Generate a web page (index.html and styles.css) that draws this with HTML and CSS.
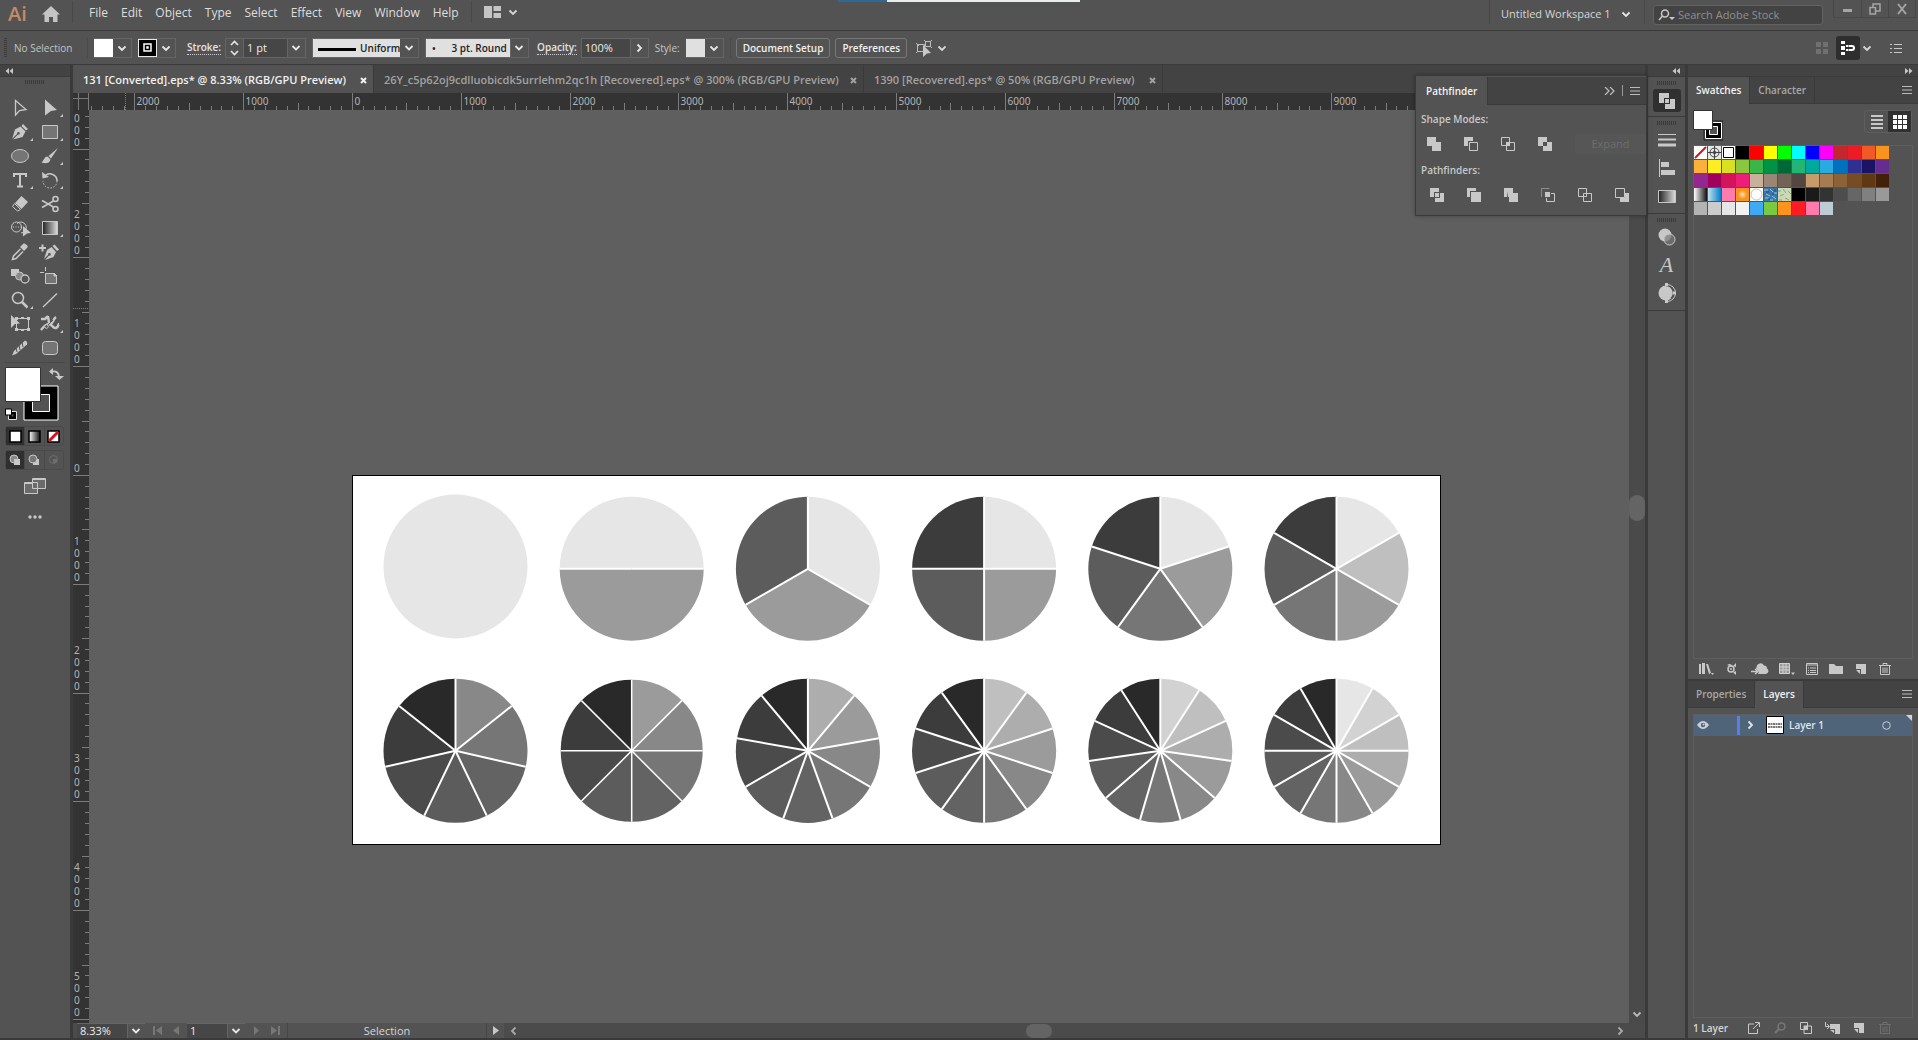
FILE: index.html
```
<!DOCTYPE html>
<html lang="en">
<head>
  <meta charset="UTF-8" />
  <meta name="viewport" content="width=device-width, initial-scale=1.0"/>
  <title>131 [Converted].eps</title>
  <link rel="stylesheet" href="styles.css">
</head>
<body>
  <!-- shared glyphs -->
  <svg class="defs" aria-hidden="true">
    <defs>
      <linearGradient id="fade"><stop offset="0" stop-color="#222"/><stop offset="1" stop-color="#ddd"/></linearGradient>
      <linearGradient id="fadeRev"><stop offset="0" stop-color="#fff"/><stop offset="1" stop-color="#111"/></linearGradient>
    </defs>
    <symbol id="chev" viewBox="0 0 10 10"><path d="M1.5 3.5 5 7l3.500-3.500" fill="none" stroke="currentColor" stroke-width="1.8"/></symbol>
    <symbol id="menu" viewBox="0 0 10 10"><path d="M0 1.500h10M0 5h10M0 8.500h10" stroke="currentColor"/></symbol>
    <symbol id="left2" viewBox="0 0 8 6"><path d="M4 0v6L.5 3zM8 0v6L4.500 3z" fill="currentColor"/></symbol>
    <symbol id="right2" viewBox="0 0 8 6"><path d="M0 0v6l3.500-3zM4 0v6l3.500-3z" fill="currentColor"/></symbol>
    <symbol id="new" viewBox="0 0 12 12"><path d="M1 1h10v10H6V6H1z" fill="currentColor"/><path d="M1 7h4v4z" fill="currentColor"/></symbol>
    <symbol id="trash" viewBox="0 0 12 12"><path d="M0 2.500h12M4 2V.500h4V2M1.500 3v8.500h9V3M4 4.500v5.500M6 4.500v5.500M8 4.500v5.500" fill="none" stroke="currentColor"/></symbol>
  </svg>

  <header class="menubar">
    <span class="logo">Ai</span>
    <button class="plain home" aria-label="Home"><svg width="18" height="16" viewBox="0 0 18 16"><path d="M9 0 0 8.500h2.500V16H7v-5h4v5h4.500V8.500H18z" fill="#c4c4c4"/></svg></button>
    <nav class="menus">
      <a href="#">File</a><a href="#">Edit</a><a href="#">Object</a><a href="#">Type</a><a href="#">Select</a><a href="#">Effect</a><a href="#">View</a><a href="#">Window</a><a href="#">Help</a>
    </nav>
    <button class="plain arrange" aria-label="Arrange documents">
      <svg width="17" height="12" viewBox="0 0 17 12"><path d="M0 0h8v12H0zM9.500 0H17v5H9.500zM9.500 7H17v5H9.500z" fill="#c4c4c4"/></svg>
      <svg width="10" height="10"><use href="#chev"/></svg>
    </button>
    <div class="progress"></div>
    <div class="workspace"><select class="ws" aria-label="Workspace"><option>Untitled Workspace 1</option></select></div>
    <label class="search">
      <svg width="18" height="12" viewBox="0 0 18 12"><g fill="none" stroke="#c8c8c8" stroke-width="1.500"><circle cx="7" cy="4.500" r="3.500"/><path d="M4.500 7 1 11"/></g><path d="M11 8h6l-3 3z" fill="#c8c8c8"/></svg>
      <input type="text" placeholder="Search Adobe Stock" aria-label="Search Adobe Stock">
    </label>
    <div class="winbtns">
      <button aria-label="Minimize"><svg width="12" height="12"><path d="M1 7.500h9" stroke="#a5a5a5" stroke-width="3"/></svg></button>
      <button aria-label="Restore"><svg width="12" height="12" fill="none" stroke="#a5a5a5" stroke-width="1.500"><path d="M1 4.500h5.500V11H1zM4 4.500V1h7v7H6.500"/></svg></button>
      <button aria-label="Close"><svg width="12" height="12"><path d="m2 1 8 10M10 1 2 11" stroke="#a5a5a5" stroke-width="2"/></svg></button>
    </div>
  </header>

  <section class="control">
    <i class="vgrip"></i>
    <span class="nosel">No Selection</span>
    <div class="combo fillpick"><button class="sw white" aria-label="Fill"></button><button class="drop" aria-label="Fill menu"><svg width="10" height="10"><use href="#chev"/></svg></button></div>
    <div class="combo strokepick"><button class="sw black" aria-label="Stroke colour"><svg width="9" height="9"><path d="M1 1h7v7H1zM4 4h1v1H4z" fill="none" stroke="#fff" stroke-width="1.500"/></svg></button><button class="drop" aria-label="Stroke menu"><svg width="10" height="10"><use href="#chev"/></svg></button></div>
    <label class="lbl" for="weight">Stroke:</label>
    <div class="combo weight">
      <button class="spin" aria-label="Step stroke"><svg width="9" height="16" viewBox="0 0 9 16"><path d="m1 5 3.500-3.500L8 5M1 11l3.500 3.500L8 11" fill="none" stroke="#e6e6e6" stroke-width="1.600"/></svg></button>
      <select id="weight" class="dd dark"><option>1 pt</option></select>
    </div>
    <select class="dd light uniform" aria-label="Width profile"><option>Uniform</option></select>
    <select class="dd light round" aria-label="Brush"><option>•&nbsp; &nbsp; &nbsp;&nbsp;3 pt. Round</option></select>
    <label class="lbl" for="opacity">Opacity:</label>
    <div class="combo opacity"><input id="opacity" type="text" value="100%"><button class="drop" aria-label="Opacity slider"><svg class="turn" width="10" height="10"><use href="#chev"/></svg></button></div>
    <span class="style-lbl">Style:</span>
    <div class="combo"><button class="sw grey" aria-label="Style"></button><button class="drop" aria-label="Style menu"><svg width="10" height="10"><use href="#chev"/></svg></button></div>
    <div class="docbtns"><button class="btn">Document Setup</button><button class="btn">Preferences</button></div>
    <button class="plain similar" aria-label="Select similar">
      <svg width="18" height="18" viewBox="0 0 18 18"><g fill="none" stroke="#bdbdbd"><path d="M2.500 5.500h7v7h-7zM10.500 2.500h5v5h-5zM1 4l3 3M1 14l2-2M9 1l2 2M17 1l-2 2M17 9l-2-2"/></g><path d="m8 6 8 8-4 .5L8 18z" fill="#c8c8c8"/></svg>
      <svg width="10" height="10"><use href="#chev"/></svg>
    </button>
    <div class="ctl-right">
      <svg width="12" height="12" fill="#707070"><path d="M0 0h5v5H0zM7 0h5v5H7zM0 7h5v5H0zM7 7h5v5H7z"/></svg>
      <button class="snap" aria-label="Snap"><svg width="14" height="14" viewBox="0 0 14 14"><path d="M0 0h4v3H0zM0 5h4v4H0zM0 11h4v3H0zM5 4h2v2H5zM5 8h2v2H5z" fill="#fff"/><path d="M7.500 5H11a2 2 0 0 1 0 4H7.500" fill="none" stroke="#fff" stroke-width="2"/></svg></button>
      <svg class="snapchev" width="10" height="10"><use href="#chev"/></svg>
      <button class="plain" aria-label="Options"><svg width="12" height="10" fill="none" stroke="#c8c8c8"><path d="M0 1.500h2M4 1.500h8M0 5.500h2M4 5.500h8M0 9.500h2M4 9.500h8"/></svg></button>
    </div>
  </section>

  <main class="workarea">
    <aside class="tools">
      <div class="strip"><svg width="8" height="6"><use href="#left2"/></svg></div>
      <i class="grip"></i>
      <div class="toolgrid">
        <button aria-label="Selection"><svg viewBox="0 0 20 20"><path d="M5.500 2.500 16 11.500 9.500 12.500 5.500 17z" fill="none" stroke="#c8c8c8" stroke-width="1.300"/></svg></button>
        <button class="more" aria-label="Direct selection"><svg viewBox="0 0 20 20"><path d="M5 1.500 17 12l-6 1-6 4.500z" fill="#c8c8c8"/></svg></button>
        <button class="more" aria-label="Pen"><svg viewBox="0 0 20 20"><path d="m13 2 5 5-2 1.500L11.500 4zM10.500 4.500l5 5-3 5.500L3 17.500l5-5a1.300 1.300 0 1 0-.8-.8l-5 5L5 7.500z" fill="#c8c8c8"/></svg></button>
        <button class="more" aria-label="Rectangle"><svg viewBox="0 0 20 20"><path d="M2.500 3.500h15v13h-15z" fill="#757575" stroke="#c8c8c8"/></svg></button>
        <button aria-label="Ellipse"><svg viewBox="0 0 20 20"><ellipse cx="10" cy="10" rx="8.500" ry="6.500" fill="#757575" stroke="#c8c8c8"/></svg></button>
        <button class="more" aria-label="Paintbrush"><svg viewBox="0 0 20 20"><path d="M18 2 8.500 10l2.500 2.500zM7.500 10.500c-3 0-3 3-6 6 4 1.500 8 1 9-3z" fill="#c8c8c8"/></svg></button>
        <button class="more" aria-label="Type"><svg viewBox="0 0 20 20"><path d="M4 7V4h12v3M10 4v12.500M7 16.500h6" fill="none" stroke="#c8c8c8" stroke-width="2"/></svg></button>
        <button class="more" aria-label="Rotate"><svg viewBox="0 0 20 20"><path d="M5 6a7 7 0 0 1 12 5" fill="none" stroke="#c8c8c8" stroke-width="1.500"/><path d="M17 11A7 7 0 0 1 3 11" fill="none" stroke="#c8c8c8" stroke-dasharray="1.500 1.500"/><path d="m2 2 .5 6.500L9 7z" fill="#c8c8c8"/></svg></button>
        <button aria-label="Eraser"><svg viewBox="0 0 20 20"><path d="m11.500 2 6.500 6-6.500 7L5 9z" fill="#c8c8c8"/><path d="m4.500 9.500-2 3 5 4.500 3-1.500z" fill="none" stroke="#c8c8c8"/></svg></button>
        <button aria-label="Scissors"><svg viewBox="0 0 20 20"><g fill="none" stroke="#c8c8c8" stroke-width="1.600"><circle cx="15.500" cy="5" r="2.500"/><circle cx="15.500" cy="15" r="2.500"/><path d="M13.500 7 2 13.500M13.500 13 2 6.500"/></g></svg></button>
        <button aria-label="Shape builder"><svg viewBox="0 0 20 20"><g fill="none" stroke="#c8c8c8"><circle cx="6.500" cy="9" r="5"/><path d="M7 5.500a5.500 5.500 0 1 1 4 9.500"/><path d="M3 9h10" stroke-dasharray="1 1.500"/></g><path d="m13 8 8 7-4 .5-4 3z" fill="#c8c8c8"/></svg></button>
        <button class="more" aria-label="Gradient"><svg viewBox="0 0 20 20"><path d="M2.500 3.500h15v13h-15z" fill="url(#fade)" stroke="#c8c8c8"/></svg></button>
        <button aria-label="Eyedropper"><svg viewBox="0 0 20 20"><path d="M16 2.500c2 1 2 2.500 1 3.500l-3 3-4-4 3-3c1-.7 2-.5 3 .5z" fill="#c8c8c8"/><path d="m10.500 7-7 7-1 3.500 3.500-1 7-7" fill="none" stroke="#c8c8c8" stroke-width="1.500"/></svg></button>
        <button aria-label="Add anchor point"><svg viewBox="0 0 20 20"><path d="m14.500 2.500 4.500 5-2 1.500-4.500-5zM11.500 5l4.500 5-2.500 5L5 18l4-4.500a1.300 1.300 0 1 0-.8-.8L4 17l3-9z" fill="#c8c8c8"/><path d="M-1 6h7M2.500 2.500v7" stroke="#c8c8c8" stroke-width="2"/></svg></button>
        <button aria-label="Blend"><svg viewBox="0 0 20 20"><path d="M1 3h8v7H1z" fill="#c8c8c8"/><circle cx="9.500" cy="10" r="4" fill="#8a8a8a" stroke="#c8c8c8"/><circle cx="15" cy="13" r="4" fill="#535353" stroke="#c8c8c8" stroke-width="1.300"/></svg></button>
        <button aria-label="Artboard"><svg viewBox="0 0 20 20"><path d="M5.500 7.500h9l2 2v8h-11z" fill="#757575" stroke="#c8c8c8"/><path d="M5.500 1v4M0 6.500h4M14 7v3h3z" stroke="#c8c8c8" fill="#c8c8c8"/></svg></button>
        <button class="more" aria-label="Zoom"><svg viewBox="0 0 20 20"><circle cx="8" cy="8" r="5.500" fill="none" stroke="#c8c8c8" stroke-width="1.500"/><path d="m12 12 5.500 5.500" stroke="#c8c8c8" stroke-width="2.500"/></svg></button>
        <button aria-label="Line"><svg viewBox="0 0 20 20"><path d="M3 17 17 3.500" stroke="#c8c8c8" stroke-width="1.400"/></svg></button>
        <button aria-label="Free transform"><svg viewBox="0 0 20 20"><path d="M6.500 4.500h12v11h-12z" fill="none" stroke="#c8c8c8"/><path d="M5 3h3v3H5zM17 3h3v3h-3zM17 14h3v3h-3zM5 14h3v3H5zM11 3h3v2h-3zM11 15h3v2h-3zM1 1l9 8.500-5 .5-4 4z" fill="#c8c8c8"/></svg></button>
        <button class="more" aria-label="Width"><svg viewBox="0 0 20 20"><path d="M1 5h4c2-1 1-3 3-2 1 3 0 5 2 7 3 0 3-5 6-7" fill="none" stroke="#c8c8c8" stroke-width="2.500"/><path d="M1 16c3-4 5-6 8-6s4 5 7 4 2-4 3-4" fill="none" stroke="#c8c8c8" stroke-width="2.500"/><circle cx="6.500" cy="12.500" r="1.800" fill="#535353" stroke="#c8c8c8"/><path d="M8 11l5-5" stroke="#535353"/></svg></button>
        <button aria-label="Pencil"><svg viewBox="0 0 20 20"><path d="M15 2.500q3 1 2 4L6 16l-4 1.500L4 13z" fill="#c8c8c8"/><path d="m12 4 1 5M9 7l1 5M6 10l1 4" stroke="#535353"/></svg></button>
        <button aria-label="Rounded rectangle"><svg viewBox="0 0 20 20"><rect x="2.500" y="3.500" width="15" height="13" rx="3" fill="#757575" stroke="#c8c8c8"/></svg></button>
      </div>
      <div class="paint">
        <svg width="60" height="56" viewBox="0 0 60 56">
          <path d="M19 20h34v34H19z" fill="#000" stroke="#fff"/><path d="M27.500 28.500h17v17h-17z" fill="#535353" stroke="#fff"/>
          <path d="M.5 1.500h35v34h-35z" fill="#fff" stroke="#333"/>
          <path d="M47 5.500q7-1 7 6" fill="none" stroke="#c8c8c8" stroke-width="2"/><path d="m44 5.500 4-3.500v7zM50 10h9l-4.500 4z" fill="#c8c8c8"/>
          <path d="M5 47h5v5H5z" fill="none" stroke="#000" stroke-width="3"/><path d="M3.500 45.500h8v8h-8z" fill="none" stroke="#ddd"/><path d="M.5 43h6v6h-6z" fill="#fff" stroke="#000"/>
        </svg>
      </div>
      <div class="seg modes">
        <button class="on" aria-label="Colour"><svg width="13" height="13"><path d="M1 1h11v11H1z" fill="#fff" stroke="#000" stroke-width="1.500"/></svg></button>
        <button aria-label="Gradient fill"><svg width="13" height="13"><path d="M1 1h11v11H1z" fill="url(#fadeRev)" stroke="#000" stroke-width="1.500"/></svg></button>
        <button aria-label="None"><svg width="13" height="13"><path d="M1 1h11v11H1z" fill="#fff" stroke="#000" stroke-width="1.500"/><path d="M2 11 11 2" stroke="#d8131b" stroke-width="3"/></svg></button>
      </div>
      <div class="seg draw">
        <button class="on" aria-label="Draw normal"><svg width="12" height="12"><circle cx="5" cy="5" r="4" fill="#888" stroke="#c8c8c8"/><path d="M5 5h6v6H5z" fill="#c8c8c8"/></svg></button>
        <button aria-label="Draw behind"><svg width="12" height="12"><path d="M5 5h6v6H5z" fill="#c8c8c8"/><circle cx="5" cy="5" r="4" fill="#777" stroke="#c8c8c8"/></svg></button>
        <button aria-label="Draw inside"><svg width="12" height="12"><circle cx="5.500" cy="5.500" r="4" fill="none" stroke="#6d6d6d"/><path d="M5 5h4v4H5z" fill="#6d6d6d"/></svg></button>
      </div>
      <button class="plain screen" aria-label="Screen mode"><svg width="22" height="17" viewBox="0 0 22 17"><g fill="#6b6b6b" stroke="#c8c8c8"><path d="M.5 5.500h13v11H.5zM8.500 1.500h13v10h-13z"/><path d="M1 6h7M9 2h12" stroke-width="2"/></g></svg></button>
      <button class="plain dots" aria-label="Edit toolbar"><svg width="14" height="4" fill="#c8c8c8"><circle cx="2" cy="2" r="1.700"/><circle cx="7" cy="2" r="1.700"/><circle cx="12" cy="2" r="1.700"/></svg></button>
    </aside>

    <section class="doc">
      <div class="tabs">
        <div class="tab active"><a href="#">131 [Converted].eps* @ 8.33% (RGB/GPU Preview)</a><button aria-label="Close tab"><svg width="7" height="7"><path d="m1 1 5 5M6 1 1 6" stroke="currentColor" stroke-width="2"/></svg></button></div>
        <div class="tab second"><a href="#">26Y_c5p62oj9cdlluobicdk5urrlehm2qc1h [Recovered].eps* @ 300% (RGB/GPU Preview)</a><button aria-label="Close tab"><svg width="7" height="7"><path d="m1 1 5 5M6 1 1 6" stroke="currentColor" stroke-width="2"/></svg></button></div>
        <div class="tab"><a href="#">1390 [Recovered].eps* @ 50% (RGB/GPU Preview)</a><button aria-label="Close tab"><svg width="7" height="7"><path d="m1 1 5 5M6 1 1 6" stroke="currentColor" stroke-width="2"/></svg></button></div>
      </div>
      <svg class="corner" viewBox="0 0 16 17"><path d="M5.500 0v17M0 5.500h16M15.500 0v17" stroke="#7a7a7a"/></svg>
      <svg class="hruler" id="hruler"></svg>
      <svg class="vruler" id="vruler"></svg>
      <div class="canvas"><svg class="artboard" id="artboard" width="1089" height="371" viewBox="352 475 1089 371"></svg></div>
      <div class="vscroll"><i class="thumb"></i><svg width="10" height="10"><use href="#chev"/></svg></div>
      <footer class="status">
        <select class="dd dark zoom" aria-label="Zoom level"><option>8.33%</option></select>
        <div class="nav">
          <button class="plain" aria-label="First"><svg width="10" height="9" fill="#777"><path d="M0 0h2v9H0zM9 0v9L3 4.500z"/></svg></button>
          <button class="plain" aria-label="Previous"><svg width="7" height="9" fill="#777"><path d="M6 0v9L0 4.500z"/></svg></button>
        </div>
        <select class="dd dark page" aria-label="Artboard"><option>1</option></select>
        <div class="nav">
          <button class="plain" aria-label="Next"><svg width="7" height="9" fill="#777"><path d="M1 0v9l5-4.500z"/></svg></button>
          <button class="plain" aria-label="Last"><svg width="10" height="9" fill="#777"><path d="M8 0h2v9H8zM1 0v9l6-4.500z"/></svg></button>
        </div>
        <span class="mode">Selection</span>
        <button class="plain play" aria-label="Status menu"><svg width="6" height="9" fill="#c8c8c8"><path d="M0 0v9l6-4.500z"/></svg></button>
        <div class="hscroll"><svg class="back" width="10" height="10"><use href="#chev"/></svg><i class="thumb"></i><svg class="turn" width="10" height="10"><use href="#chev"/></svg></div>
      </footer>

      <div class="pathfinder">
        <div class="ptabs"><a class="on" href="#">Pathfinder</a><span class="pico"><svg width="11" height="8" fill="none" stroke="#bbb" stroke-width="1.300"><path d="m1 0 4 4-4 4M6 0l4 4-4 4"/></svg><i></i><svg width="10" height="10"><use href="#menu"/></svg></span></div>
        <h3>Shape Modes:</h3>
        <div class="pf modesrow">
          <button aria-label="Unite"><svg viewBox="0 0 14 14"><path d="M0 0h9v5h5v9H5V9H0z" fill="#c8c8c8"/></svg></button>
          <button aria-label="Minus front"><svg viewBox="0 0 14 14"><path d="M0 0h9v4H4v5H0z" fill="#c8c8c8"/><path d="M5.500 5.500h8v8h-8z" fill="none" stroke="#c8c8c8"/></svg></button>
          <button aria-label="Intersect"><svg viewBox="0 0 14 14"><path d="M.5.5h8v8h-8zM5.500 5.500h8v8h-8z" fill="none" stroke="#c8c8c8"/><path d="M5 5h4v4H5z" fill="#c8c8c8"/></svg></button>
          <button aria-label="Exclude"><svg viewBox="0 0 14 14"><path d="M0 0h9v5h5v9H5V9H0zM5 5v4h4V5z" fill="#c8c8c8" fill-rule="evenodd"/></svg></button>
          <button class="expand" disabled>Expand</button>
        </div>
        <h3>Pathfinders:</h3>
        <div class="pf sixrow">
          <button aria-label="Divide"><svg viewBox="0 0 14 14"><path d="M0 0h9v4H4v5H0zM10 5h4v9H5v-4h5zM5 5h4v4H5z" fill="#c8c8c8"/></svg></button>
          <button aria-label="Trim"><svg viewBox="0 0 14 14"><path d="M0 0h9v3H3v6H0zM4 4h10v10H4z" fill="#c8c8c8"/></svg></button>
          <button aria-label="Merge"><svg viewBox="0 0 14 14"><path d="M0 0h9v5h5v9H5V9H4V3L3 9H0z" fill="#c8c8c8"/></svg></button>
          <button aria-label="Crop"><svg viewBox="0 0 14 14"><path d="M.5.5h8M.5 0v9" fill="none" stroke="#8c8c8c"/><path d="M10 5.500h3.500v8h-8V10" fill="none" stroke="#c8c8c8"/><path d="M4 4h5v5H4z" fill="#c8c8c8"/></svg></button>
          <button aria-label="Outline"><svg viewBox="0 0 14 14"><path d="M.5.5h8v8h-8zM5.500 5.500h8v8h-8z" fill="none" stroke="#c8c8c8"/></svg></button>
          <button aria-label="Minus back"><svg viewBox="0 0 14 14"><path d="M10 5h4v9H5v-4h5z" fill="#c8c8c8"/><path d="M.5.5h9v9h-9z" fill="none" stroke="#c8c8c8"/></svg></button>
        </div>
      </div>
    </section>

    <aside class="dock">
      <div class="strip end"><svg width="8" height="6"><use href="#left2"/></svg></div>
      <div class="dgroup">
        <i class="grip"></i>
        <button class="on" aria-label="Pathfinder"><svg width="16" height="16"><path d="M0 0h10v5H5v5H0zM11 6h5v10H6v-5h5zM6 6h4v4H6z" fill="#c8c8c8"/></svg></button>
      </div>
      <div class="dgroup">
        <i class="grip"></i>
        <button aria-label="Stroke"><svg width="18" height="14" stroke="#c8c8c8"><path d="M0 1.500h18"/><path d="M0 6.500h18" stroke-width="2"/><path d="M0 12h18" stroke-width="3"/></svg></button>
        <button aria-label="Align"><svg width="16" height="18"><path d="M.5 0v18" stroke="#c8c8c8"/><path d="M2 3h8v5H2zM2 11h14v5H2z" fill="#c8c8c8"/></svg></button>
        <button aria-label="Gradient panel"><svg width="18" height="13"><path d="M.5.5h17v12H.5z" fill="url(#fade)" stroke="#c8c8c8"/></svg></button>
      </div>
      <div class="dgroup">
        <i class="grip"></i>
        <button aria-label="Transparency"><svg width="18" height="18"><circle cx="7" cy="7" r="6.500" fill="#c8c8c8"/><circle cx="11.500" cy="11.500" r="5.500" fill="#777" fill-opacity=".7" stroke="#c8c8c8"/></svg></button>
        <button class="glyph" aria-label="Glyphs">A</button>
        <button aria-label="Appearance"><svg width="18" height="20" viewBox="0 0 18 20"><circle cx="8" cy="10" r="7.500" fill="#c8c8c8"/><path d="M8 2.500a7.500 7.500 0 0 1 5 13" fill="none" stroke="#535353" stroke-width="1.500"/><path d="M9 1.500a8.500 8.500 0 0 1 0 17" fill="none" stroke="#c8c8c8"/><path d="M7 0h3v3H7zM7 17h3v3H7zM15 8.500h3v3h-3z" fill="#c8c8c8"/></svg></button>
      </div>
    </aside>

    <aside class="panels">
      <div class="strip end"><svg width="8" height="6"><use href="#right2"/></svg></div>
      <section class="panel swatches">
        <div class="ptabs"><a class="on" href="#">Swatches</a><a href="#">Character</a><span class="pico"><svg width="10" height="10"><use href="#menu"/></svg></span></div>
        <div class="swhead">
          <svg width="30" height="31"><path d="M12.500 12.500h16v16h-16z" fill="#000" stroke="#fff"/><path d="M11 11h19v19H11z" fill="none" stroke="#222"/><path d="M16.500 16.500h8v8h-8z" fill="#535353" stroke="#fff"/><path d="M.5.5h19v19H.5z" fill="#fff" stroke="#333"/></svg>
          <div class="viewbtns">
            <button aria-label="List view"><svg width="12" height="14" stroke="#c8c8c8" stroke-width="2"><path d="M0 1h12M0 5h12M0 9h12M0 13h12"/></svg></button>
            <button class="on" aria-label="Grid view"><svg width="14" height="14" fill="#fff"><path d="M0 0h4v4H0zM5 0h4v4H5zM10 0h4v4h-4zM0 5h4v4H0zM5 5h4v4H5zM10 5h4v4h-4zM0 10h4v4H0zM5 10h4v4H5zM10 10h4v4h-4z"/></svg></button>
          </div>
        </div>
        <div class="swlist" id="swlist"></div>
        <div class="pfoot">
          <button aria-label="Libraries"><svg viewBox="0 0 16 12"><path d="M1 1h2v10H1zM4 0h3v11H4zM8 1h2l3 9-2 1zM13 10h3l-1.500 2z" fill="#c8c8c8"/></svg></button>
          <button aria-label="Colour themes"><svg viewBox="0 0 16 12"><circle cx="7" cy="6" r="3" fill="none" stroke="#c8c8c8" stroke-width="1.500"/><circle cx="7" cy="6" r="1" fill="#c8c8c8"/><path d="M12 0v4l-3-1zM12 12V8L9 9.500zM3 2q4-3 6 2" fill="#c8c8c8"/></svg></button>
          <button aria-label="Add to library"><svg width="18" viewBox="0 0 18 12"><path d="M7 11h8a3 3 0 0 0 1-5.500 3 3 0 0 0-3-3A4 4 0 0 0 5.500 4L5 6l3 2.500z" fill="#c8c8c8"/><path d="M0 8.500h6M4 6l3 2.500L4 11" stroke="#c8c8c8" stroke-width="1.500" fill="none"/></svg></button>
          <button aria-label="Show kinds"><svg viewBox="0 0 16 12"><path d="M.5.5h10v10H.5zM4 0v11M7 0v11M0 4h11M0 7h11" fill="#999" stroke="#d0d0d0"/><path d="M12 9.500h4L14 12z" fill="#c8c8c8"/></svg></button>
          <button aria-label="Options"><svg width="12" viewBox="0 0 12 12"><path d="M.5.5h11v11H.5zM0 2h12M2 5h1M4 5h6M2 7.500h1M4 7.500h6M2 9.500h1M4 9.500h6" fill="none" stroke="#c8c8c8"/></svg></button>
          <button aria-label="New group"><svg width="14" viewBox="0 0 14 12"><path d="M0 1h5l2 2h7v8H0z" fill="#c8c8c8"/></svg></button>
          <button aria-label="New swatch"><svg width="12"><use href="#new"/></svg></button>
          <button aria-label="Delete swatch"><svg width="12"><use href="#trash"/></svg></button>
        </div>
      </section>
      <section class="panel layers">
        <div class="ptabs"><a href="#">Properties</a><a class="on" href="#">Layers</a><span class="pico"><svg width="10" height="10"><use href="#menu"/></svg></span></div>
        <div class="lylist">
          <div class="layer">
            <button class="plain eye" aria-label="Toggle visibility"><svg width="12" height="8" viewBox="0 0 12 8"><path d="M0 4q6-8 12 0-6 8-12 0z" fill="#c8d0d8"/><circle cx="6" cy="4" r="2.200" fill="#4f6479"/><circle cx="6.500" cy="3.500" r="1" fill="#c8d0d8"/></svg></button>
            <i class="bar"></i>
            <button class="plain open" aria-label="Expand layer"><svg class="turn" width="10" height="10"><use href="#chev"/></svg></button>
            <svg class="thumbnail" width="18" height="18"><path d="M.5.5h17v17H.5z" fill="#fff" stroke="#000"/><path d="M2 8h14M2 11h14" stroke="#777" stroke-width="2" stroke-dasharray="2 .5"/></svg>
            <span>Layer 1</span>
            <button class="plain target" aria-label="Target"><svg width="9" height="9"><circle cx="4.500" cy="4.500" r="3.800" fill="none" stroke="#c8d0d8"/></svg></button>
          </div>
        </div>
        <div class="pfoot">
          <span>1 Layer</span>
          <button aria-label="Export"><svg width="12" viewBox="0 0 12 12"><path d="M6 2H.5v9.500h9V7M5 7l6-6M7 .5h4.500V5" fill="none" stroke="#c8c8c8"/></svg></button>
          <button aria-label="Locate"><svg width="12" viewBox="0 0 12 12"><circle cx="7.500" cy="4.500" r="3.500" fill="none" stroke="#777" stroke-width="1.500"/><path d="m5 7-4 4" stroke="#777" stroke-width="2"/></svg></button>
          <button aria-label="Clipping mask"><svg width="12" viewBox="0 0 12 12"><path d="M.5.5h7v7h-7zM4 4h7.500v7.500H4z" fill="none" stroke="#c8c8c8"/><path d="M4 4h4v4H4z" fill="#c8c8c8"/></svg></button>
          <button aria-label="New sublayer"><svg width="15" viewBox="0 0 15 12"><path d="M5 2h10v10h-5V7H5zM5 8h4v3z" fill="#c8c8c8"/><path d="M.5 0v4.500H4M2 2l2.500 2.500L2 7" fill="none" stroke="#c8c8c8"/></svg></button>
          <button aria-label="New layer"><svg width="12"><use href="#new"/></svg></button>
          <button class="off" aria-label="Delete layer"><svg width="12"><use href="#trash"/></svg></button>
        </div>
      </section>
    </aside>
  </main>
  <script src="script.js"></script>
</body>
</html>
```

FILE: styles.css
```
* { box-sizing: border-box; }
body { margin: 0; height: 100vh; display: flex; flex-direction: column; overflow: hidden; background: #535353; color: #d6d6d6; font: 11px/14px 'Open Sans', 'Noto Sans', sans-serif; border-bottom: 2px solid #3a3a3a; }
button, input, select { font: inherit; color: inherit; margin: 0; padding: 0; border: 0; border-radius: 0; background: none; }
button { display: flex; align-items: center; justify-content: center; cursor: pointer; }
a { color: inherit; text-decoration: none; }
i { display: block; }
svg { display: block; flex: none; }
.defs { position: absolute; width: 0; height: 0; }
.turn { transform: rotate(-90deg); }
.back { transform: rotate(90deg); }

/* menu bar */
.menubar { position: relative; display: flex; align-items: center; height: 31px; flex: none; border-bottom: 1px solid #3a3a3a; padding-bottom: 6px; font-size: 12px; }
.logo { width: 42px; padding: 4px 0 0 8px; font-size: 20px; line-height: 22px; font-weight: 600; color: #c58a66; }
.home { width: 18px; padding-top: 4px; }
.menus { display: flex; gap: 13px; margin-left: 12px; padding: 4px 12px 2px 16px; border-left: 1px solid #484848; border-right: 1px solid #484848; line-height: 16px; color: #dedede; }
.arrange { gap: 7px; margin-left: 12px; }
.progress { position: absolute; top: 0; left: 838px; width: 242px; height: 2px; background: linear-gradient(90deg, #2d6a9a 49px, #e8eeee 49px); }
.workspace { margin-left: auto; padding: 4px 13px 0 11px; border-left: 1px solid #484848; border-right: 1px solid #484848; }
.ws { appearance: none; width: 130px; height: 20px; line-height: 20px; font-size: 11px; background: url("data:image/svg+xml,%3Csvg xmlns='http://www.w3.org/2000/svg' width='10' height='10'%3E%3Cpath d='M1.500 3.500 5 7l3.500-3.500' fill='none' stroke='%23e6e6e6' stroke-width='1.800'/%3E%3C/svg%3E") no-repeat right center; }
.search { display: flex; align-items: center; gap: 2px; width: 170px; height: 20px; margin: 5px 10px 0 8px; padding-left: 4px; background: #434343; border: 1px solid #626262; border-radius: 3px; }
.search input { width: 140px; outline: none; }
.search input::placeholder { color: #8f8f8f; opacity: 1; font-size: 11px; }
.winbtns { display: flex; align-self: flex-start; height: 18px; margin-right: 2px; border: 1px solid #484848; border-top: 0; }
.winbtns button { width: 27px; }
.winbtns button + button { border-left: 1px solid #484848; }

/* control bar */
.control { display: flex; align-items: center; height: 34px; flex: none; padding-left: 4px; border-bottom: 1px solid #3a3a3a; }
.vgrip { width: 3px; height: 19px; background: repeating-linear-gradient(#3c3c3c 0 1px, transparent 1px 2px); }
.nosel { width: 81px; margin-right: 6px; padding-left: 7px; line-height: 20px; font-size: 10px; border-right: 1px solid #4a4a4a; white-space: nowrap; color: #c4c4c4; }
.combo { display: flex; height: 20px; border: 1px solid #656565; border-left: 0; }
.combo .sw { width: 19px; }
.white { background: #fff; }
.grey { background: #e0e0e0; }
.combo .black { background: #000; border: 1px solid #e8e8e8; }
.drop { width: 18px; color: #e8e8e8; }
.strokepick { margin-left: 6px; }
.lbl { margin-left: 11px; margin-right: 4px; color: #e4e4e4; font-weight: 600; font-size: 10px; border-bottom: 1px dotted #ccc; }
.weight { border-left: 1px solid #656565; }
.spin { width: 17px; }
.dd { appearance: none; height: 20px; color: #ececec; border: 1px solid #656565; background: url("data:image/svg+xml,%3Csvg xmlns='http://www.w3.org/2000/svg' width='18' height='20'%3E%3Cpath d='M0 0h18v20H0z' fill='%23535353'/%3E%3Cpath d='M.5 0v20' stroke='%23656565'/%3E%3Cpath d='m5.500 8 3.500 3.500L12.500 8' fill='none' stroke='%23e8e8e8' stroke-width='1.800'/%3E%3C/svg%3E") no-repeat right center #464646; padding: 0 20px 0 3px; }
.weight .dd { width: 62px; height: 18px; border: 0; border-left: 1px solid #656565; }
.light { margin-left: 6px; color: #222; background-color: #e0e0e0; font-weight: 600; font-size: 10px; }
.uniform { width: 107px; padding: 0 18px 0 47px; background-image: linear-gradient(#000, #000), url("data:image/svg+xml,%3Csvg xmlns='http://www.w3.org/2000/svg' width='18' height='20'%3E%3Cpath d='M0 0h18v20H0z' fill='%23535353'/%3E%3Cpath d='m5.500 8 3.500 3.500L12.500 8' fill='none' stroke='%23e8e8e8' stroke-width='1.800'/%3E%3C/svg%3E"); background-size: 38px 3px, 18px 20px; background-position: 5px 9px, right center; background-repeat: no-repeat; }
.round { width: 104px; padding-left: 6px; }
.light + .lbl { margin-left: 8px; }
.opacity { border-left: 1px solid #656565; }
.opacity input { width: 48px; padding-left: 3px; background: #464646; color: #ececec; }
.opacity .drop { border-left: 1px solid #656565; }
.style-lbl { margin: 0 6px; font-size: 10px; color: #c8c8c8; }
.docbtns { display: flex; gap: 5px; margin-left: 6px; padding-left: 5px; border-left: 1px solid #4a4a4a; }
.btn { height: 20px; padding: 0 6px; border: 1px solid #777; border-radius: 3px; color: #f0f0f0; font-weight: 600; font-size: 10px; }
.similar { gap: 4px; margin-left: 8px; }
.ctl-right { display: flex; align-items: center; margin-left: auto; padding-right: 16px; }
.snap { width: 24px; height: 24px; margin: 0 2px 0 8px; background: #2e2e2e; border-radius: 3px; }
.snapchev { margin-right: 18px; }

/* work area */
.workarea { display: grid; grid-template-columns: 70px 1fr 37px 230px; column-gap: 3px; flex: 1; min-height: 0; background: #3a3a3a; }
.tools, .dock, .panels { background: #535353; }
.strip { display: flex; align-items: center; height: 12px; padding: 0 5px; background: #434343; border-bottom: 1px solid #3a3a3a; color: #c8c8c8; flex: none; }
.strip.end { justify-content: flex-end; }
.grip { width: 20px; height: 4px; background: repeating-linear-gradient(90deg, #3a3a3a 0 1px, transparent 1px 2px); }

.tools { display: flex; flex-direction: column; }
.tools > .grip { margin: 3px 0 0 25px; }
.toolgrid { display: grid; grid-template-columns: 30px 30px; grid-auto-rows: 24px; margin: 12px 5px 0; padding-bottom: 2px; border-bottom: 1px solid #494949; }
.toolgrid button { position: relative; }
.toolgrid svg { width: 20px; height: 20px; overflow: visible; }
.more::after { content: ""; position: absolute; right: 2px; bottom: 3px; width: 3px; height: 3px; background: #c8c8c8; clip-path: polygon(100% 0, 100% 100%, 0 100%); }
.paint { padding: 3px 0 0 5px; }
.seg { display: flex; width: 59px; height: 20px; margin: 4px 0 0 5px; border: 1px solid #4a4a4a; border-radius: 3px; }
.seg button { flex: 1; }
.seg button + button { border-left: 1px solid #494949; }
.seg .on { background: #303030; }
.screen { width: 22px; margin: 7px 0 0 24px; }
.dots { width: 14px; margin: 21px 0 0 28px; }

/* document */
.doc { position: relative; display: grid; grid-template-columns: 16px 1fr 16px; grid-template-rows: 28px 17px 1fr 15px; min-width: 0; }
.tabs { grid-column: 1 / 4; display: flex; background: #434343; white-space: nowrap; }
.tab { display: flex; align-items: center; justify-content: space-between; width: 299px; padding: 2px 6px 0 10px; border-right: 1px solid #3a3a3a; color: #a2a2a2; font-weight: 600; }
.tab.second { width: 490px; }
.tab.active { width: 301px; background: #535353; color: #f0f0f0; }
.corner { width: 16px; height: 17px; background: #333; }
.hruler { grid-column: 2 / 4; width: 100%; height: 17px; background: #333; }
.vruler { width: 16px; height: 100%; background: #333; }
.hruler, .vruler { stroke: #7c7c7c; }
.hruler text, .vruler text { fill: #b4b4b4; stroke: none; font-size: 10px; font-family: 'Noto Sans', sans-serif; }
.canvas { position: relative; overflow: hidden; background: #5f5f5f; }
.artboard { position: absolute; left: 263px; top: 365px; }
.vscroll { display: flex; flex-direction: column; justify-content: space-between; align-items: center; padding-bottom: 4px; background: #4a4a4a; color: #bbb; }
.thumb { background: #646464; border-radius: 8px; }
.vscroll .thumb { width: 16px; height: 26px; margin-top: 385px; }
.status { grid-column: 1 / 4; display: flex; background: #4b4b4b; padding-left: 4px; }
.status .dd { height: 15px; border-width: 1px 0 0; }
.zoom { width: 68px; }
.page { width: 58px; }
.nav { display: flex; align-items: center; justify-content: center; gap: 10px; width: 42px; background: #535353; }
.mode { width: 200px; padding-top: 1px; text-align: center; background: #535353; border: solid #464646; border-width: 0 1px; }
.play { width: 17px; background: #535353; }
.hscroll { display: flex; flex: 1; align-items: center; justify-content: space-between; padding: 0 20px 0 5px; color: #aaa; }
.hscroll .thumb { width: 26px; height: 14px; margin-right: 56px; }

/* tabs at the head of a panel */
.ptabs { display: flex; height: 27px; background: #434343; border-bottom: 1px solid #3a3a3a; font-weight: 600; font-size: 10px; color: #a8a8a8; }
.ptabs a { padding: 6px 8px; margin-bottom: -1px; border-right: 1px solid #3a3a3a; }
.ptabs .on { background: #535353; color: #f2f2f2; }
.pico { display: flex; align-items: center; gap: 7px; margin-left: auto; padding-right: 6px; color: #bbb; }
.pico i { width: 1px; height: 11px; background: #999; }

.pathfinder { position: absolute; right: -2px; top: 10px; width: 232px; height: 141px; padding-top: 1px; background: #535353; border: 1px solid #3a3a3a; box-shadow: 0 0 4px rgba(0,0,0,0.3); }
.pathfinder .ptabs { height: 28px; }
.pathfinder .ptabs a { padding: 7px 10px; }
.pathfinder h3 { margin: 7px 0 0 5px; font-weight: 600; font-size: 10px; line-height: 14px; color: #c8c8c8; }
.pf { display: flex; align-items: center; height: 24px; }
.modesrow { margin: 6px 0 0 11px; gap: 23px; }
.sixrow { margin: 6px 0 0 14px; gap: 23px; }
.pf svg { width: 14px; height: 14px; }
.pathfinder .expand { width: 71px; height: 20px; background: #565656; color: #6d6d6d; }

/* icon dock */
.dgroup { display: flex; flex-direction: column; align-items: center; padding-top: 4px; padding-bottom: 3px; border-bottom: 1px solid #3a3a3a; }
.dgroup button { width: 28px; height: 28px; }
.dgroup .grip { margin-bottom: 1px; }
.dgroup .on { height: 23px; background: #303030; border-radius: 3px; margin: 3px 0 1px; }
.dgroup .glyph { font: italic 22px/22px 'Liberation Serif', serif; color: #c8c8c8; }

/* right panels */
.panels { display: flex; flex-direction: column; min-height: 0; }
.panel { display: flex; flex-direction: column; min-height: 0; }
.swatches { flex: 603; border-bottom: 2px solid #3a3a3a; }
.layers { flex: 358; }
.swhead { display: flex; justify-content: space-between; padding: 6px 6px 4px 5px; }
.viewbtns { display: flex; height: 23px; border: 1px solid #5e5e5e; border-radius: 3px; }
.viewbtns button { width: 23px; }
.viewbtns .on { background: #303030; }
.swlist { flex: 1; display: grid; grid-template-columns: repeat(14, 13px); grid-auto-rows: 13px; gap: 1px; align-content: start; margin: 0 5px; border: 1px solid #5e5e5e; }
.swlist svg { width: 13px; height: 13px; }
.pfoot { display: flex; align-items: center; justify-content: space-between; height: 20px; padding: 0 26px 0 10px; }
.pfoot svg { height: 12px; }
.pfoot button { min-width: 14px; color: #c8c8c8; }
.pfoot button > svg:not([width]) { width: 16px; }
.layers .pfoot { padding-left: 5px; font-size: 10px; font-weight: 600; justify-content: flex-start; gap: 12px; }
.layers .pfoot span { width: 43px; }
.layers .pfoot .off { color: #6e6e6e; }
.layers .pfoot button { flex: none; }
.layers .pfoot span + button { margin-left: 1px; }
.lylist { flex: 1; margin: 6px 5px 0; border: 1px solid #5e5e5e; }
.layer { position: relative; display: flex; align-items: center; height: 21px; background: #4f6479; font-weight: 600; font-size: 10px; color: #dfe5ea; }
.layer::after { content: ""; position: absolute; right: 0; top: 0; border: 3px solid #d0d6dc; border-left-color: transparent; border-bottom-color: transparent; }
.eye { margin-left: 3px; }
.bar { width: 3px; height: 19px; margin-left: 28px; background: #5d7ee6; }
.open { margin-left: 5px; }
.thumbnail { margin: 0 5px 0 11px; }
.target { margin-left: auto; margin-right: 21px; }
```

FILE: script.js
```
const NS = 'http://www.w3.org/2000/svg';

function add(parent, tag, attrs, text) {
  const el = document.createElementNS(NS, tag);
  for (const k in attrs) el.setAttribute(k, attrs[k]);
  if (text !== undefined) el.textContent = text;
  parent.appendChild(el);
  return el;
}

// pie charts: 12 step grey ramp, light to dark
const ramp = ['#e6e6e6', '#d2d2d2', '#bfbfbf', '#adadad', '#9b9b9b', '#888', '#767676', '#636363', '#5c5c5c', '#4b4b4b', '#3c3c3c', '#292929'];
const picks = { 1: [0], 2: [0, 4], 3: [0, 4, 8], 4: [0, 4, 8, 10], 5: [0, 4, 6, 8, 10], 6: [0, 2, 4, 6, 8, 10] };
const board = document.getElementById('artboard');
add(board, 'rect', { x: 352.5, y: 475.5, width: 1088, height: 369, fill: '#fff', stroke: '#000' });

for (let n = 1; n <= 12; n++) {
  const cx = 455.5 + ((n - 1) % 6) * 176.2;
  const cy = n === 1 ? 566.5 : n <= 6 ? 568.8 : 750.8;
  const r = n === 8 ? 71 : 72;
  if (n === 1) {
    add(board, 'circle', { cx, cy, r, fill: ramp[0] });
    continue;
  }
  const tones = picks[n] ? picks[n].map(i => ramp[i]) : ramp.slice(12 - n);
  // the halves are split left to right, all others start at the top
  const start = n === 2 ? -Math.PI / 2 : 0;
  const point = i => {
    const a = start + i * 2 * Math.PI / n;
    return [cx + r * Math.sin(a), cy - r * Math.cos(a)];
  };
  tones.forEach((fill, i) => {
    const [x1, y1] = point(i);
    const [x2, y2] = point(i + 1);
    add(board, 'path', { d: `M${cx} ${cy}L${x1} ${y1}A${r} ${r} 0 0 1 ${x2} ${y2}z`, fill });
  });
  for (let i = 0; i < n; i++) {
    const [x, y] = point(i);
    add(board, 'path', { d: `M${cx} ${cy}L${x} ${y}`, stroke: '#fff', 'stroke-width': n === 8 ? 1.5 : 2 });
  }
}

// rulers, 100 units to a tick
const step = 10.88;
function drawRulers() {
  const h = document.getElementById('hruler');
  const v = document.getElementById('vruler');
  h.replaceChildren();
  v.replaceChildren();
  for (let i = -24; 263 + i * step < h.clientWidth; i++) {
    const x = Math.round(263 + i * step) + 0.5;
    const top = i % 10 === 0 ? 0 : i % 5 === 0 ? 10 : 13;
    add(h, 'path', { d: `M${x} ${top}V17` });
    if (i % 10 === 0 && i < 100) add(h, 'text', { x: x + 2, y: 12 }, Math.abs(i) * 100);
  }
  for (let i = -33; 365 + i * step < v.clientHeight + 60; i++) {
    const y = Math.round(365 + i * step) + 0.5;
    const left = i % 10 === 0 ? 0 : i % 5 === 0 ? 9 : 12;
    add(v, 'path', { d: `M${left} ${y}H16` });
    if (i % 10 === 0) {
      const digits = String(Math.abs(i) * 100).split('');
      digits.forEach((d, k) => {
        const base = y - 4 - (digits.length - 1 - k) * 12;
        if (base > 8 && base < v.clientHeight) add(v, 'text', { x: 1, y: base }, d);
      });
    }
  }
  // cursor marks
  add(h, 'path', { d: 'M36.500 0V17', 'stroke-dasharray': '1 1' });
  add(v, 'path', { d: 'M0 198.500H16', 'stroke-dasharray': '1 1' });
}
drawRulers();
window.addEventListener('resize', drawRulers);

// swatches
const swatches = `none reg sel 000 f00 ff0 0f0 0ff 00f f0f c1272d ed1c24 f15a24 f7931e
fbb03b fcee21 d9e021 8cc63f 39b54a 009245 006837 22b573 00a99d 29abe2 0071bc 2e3192 1b1464 662d91
93278f 9e005d d4145a ed1e79 c7b299 998675 736357 534741 c69c6d a67c52 8c6239 754c24 603813 42210b
bw sky ff7bac sun ring blue leaf 000 1a1a1a 333 4d4d4d 666 808080 999
b3b3b3 ccc e6e6e6 f2f2f2 3fa9f5 7ac943 ff931e ff1d25 ff7bac bdccd4`.split(/\s+/);

const special = {
  none: '<path d="M0 0h13v13H0z" fill="#fff"/><path d="M1 12 12 1" stroke="#c8161d" stroke-width="2"/>',
  reg: '<path d="M0 0h13v13H0z" fill="#e8e8e8"/><g fill="none" stroke="#444"><circle cx="6.500" cy="6.500" r="4.500"/><circle cx="6.500" cy="6.500" r="1.500"/><path d="M6.500 0v13M0 6.500h13"/></g>',
  sel: '<path d="M0 0h13v13H0z" fill="#fff"/><path d="M1.500 1.500h10v10h-10z" fill="#fff" stroke="#000"/>',
  bw: '<path d="M0 0h13v13H0z" fill="url(#fadeRev)"/>',
  sky: '<linearGradient id="skyg"><stop stop-color="#c5e0ee"/><stop offset="1" stop-color="#0080c8"/></linearGradient><path d="M0 0h13v13H0z" fill="url(#skyg)"/>',
  sun: '<radialGradient id="sung"><stop stop-color="#ffe0b0"/><stop offset=".7" stop-color="#f7931e"/></radialGradient><path d="M0 0h13v13H0z" fill="url(#sung)"/>',
  ring: '<path d="M0 0h13v13H0z" fill="#fff"/><circle cx="6.500" cy="6.500" r="5.500" fill="none" stroke="#c9c48a"/>',
  blue: '<path d="M0 0h13v13H0z" fill="#3a78ac"/><path d="M0 2h4M6 1l3 3M10 5h3M2 6l4 2M1 10h4M8 8l4 3M6 12h3" stroke="#9cc4e0"/><path d="M2 4h3M8 6h2M4 11h2M11 1v3" stroke="#1d4a7a"/>',
  leaf: '<path d="M0 0h13v13H0z" fill="#c9d9b4"/><path d="M0 3h3M5 1l3 4M10 3l3 3M2 8l4-2M7 10l4 2M1 12h3" stroke="#7fa89a"/><path d="M3 5h3M9 8h3M5 12h2" stroke="#e6dc8c"/>'
};

const list = document.getElementById('swlist');
swatches.forEach(s => {
  const svg = add(list, 'svg', { viewBox: '0 0 13 13' });
  if (special[s]) svg.innerHTML = special[s];
  else add(svg, 'rect', { width: 13, height: 13, fill: '#' + s });
});
```
